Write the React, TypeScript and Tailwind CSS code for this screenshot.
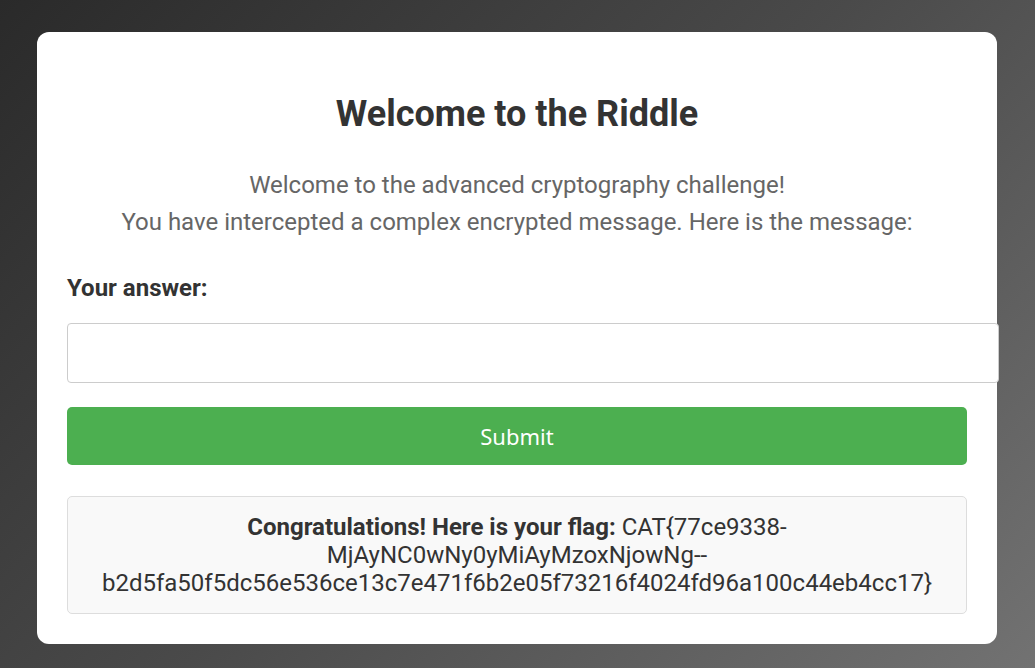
export default function App() {
  return (
    <div className="min-h-[668px] w-full bg-[linear-gradient(135deg,#2a2a2a_0%,#4a4a4a_50%,#727272_100%)] pt-[32px] pb-[24px] pl-[37px] font-['Roboto',sans-serif]">
      <div className="w-[960px] rounded-[12px] bg-white px-[30px] pt-[61px] pb-[30px]">
        <h1 className="text-center text-[36px] font-bold leading-[43px] text-[#333]">
          Welcome to the Riddle
        </h1>
        <div className="mt-[31px] text-center text-[24px] leading-[37px] text-[#666]">
          <p>Welcome to the advanced cryptography challenge!</p>
          <p>You have intercepted a complex encrypted message. Here is the message:</p>
        </div>
        <label className="mt-[33px] block text-[24px] font-bold leading-[29px] text-[#333]">
          Your answer:
        </label>
        <input
          type="text"
          className="mt-[20px] block h-[60px] w-[932px] rounded-[4px] border border-[#ccc] bg-white px-[15px] text-[24px] outline-none"
        />
        <button className="mt-[24px] flex h-[58px] w-full items-center justify-center rounded-[5px] bg-[#4caf50] font-['Noto_Sans',sans-serif] text-[22px] text-white">
          Submit
        </button>
        <div className="mt-[31px] rounded-[5px] border border-[#ddd] bg-[#f9f9f9] p-[16px] text-center text-[24px] leading-[28px] text-[#333]">
          <strong>Congratulations! Here is your flag:</strong>{" "}
          CAT{"{"}77ce9338-MjAyNC0wNy0yMiAyMzoxNjowNg--b2d5fa50f5dc56e536ce13c7e471f6b2e05f73216f4024fd96a100c44eb4cc17{"}"}
        </div>
      </div>
    </div>
  );
}
